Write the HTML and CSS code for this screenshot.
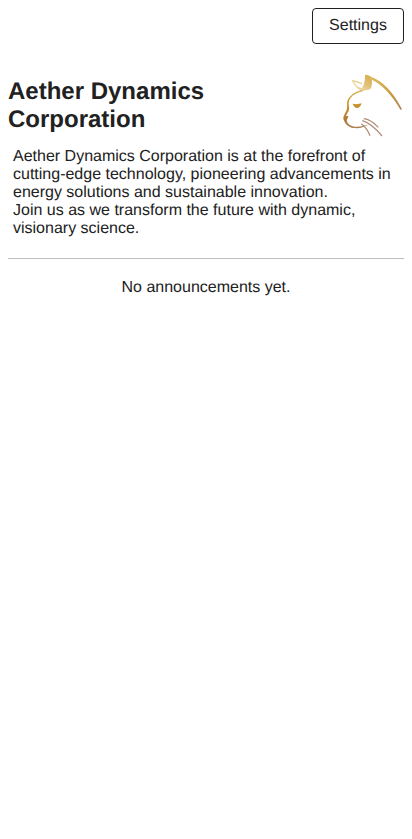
FILE: index.html
```html
<!DOCTYPE html>
<html lang="en">
<head>
<meta charset="utf-8">
<meta name="viewport" content="width=device-width, initial-scale=1">
<title>Aether Dynamics Corporation</title>
<link rel="stylesheet" href="styles.css">
</head>
<body>
<nav class="toolbar"><button class="settings" type="button">Settings</button></nav>
<header class="masthead">
<h1 class="title">Aether Dynamics Corporation</h1>
<svg class="logo" viewBox="0 0 204 222" aria-hidden="true">
<defs>
<linearGradient id="gold" gradientUnits="userSpaceOnUse" x1="100" y1="20" x2="100" y2="200">
<stop offset="0" stop-color="#e6cd8c"/>
<stop offset=".2" stop-color="#dbb35c"/>
<stop offset=".5" stop-color="#c9922c"/>
<stop offset=".75" stop-color="#b27a30"/>
<stop offset="1" stop-color="#a78272"/>
</linearGradient>
<linearGradient id="ear" gradientUnits="userSpaceOnUse" x1="106" y1="30" x2="78" y2="66">
<stop offset="0" stop-color="#d9ae52"/>
<stop offset="1" stop-color="#ead49b"/>
</linearGradient>
<linearGradient id="back" gradientUnits="userSpaceOnUse" x1="100" y1="28" x2="196" y2="125">
<stop offset="0" stop-color="#dfbd65"/>
<stop offset=".5" stop-color="#cda042"/>
<stop offset="1" stop-color="#b08459"/>
</linearGradient>
</defs>
<path class="ear" d="M87 20C97 20 104 24 107 31C109 43 108 55 104 62C94 67 85 67 74 70L80 57C85 45 88 34 87 20Z"/>
<path class="ear" d="M47 36C60 38 69 41 79 46L78 49C69 45 61 43 53 41C58 51 67 58 79 61L75 69C61 59 51 48 47 36Z"/>
<path class="back" d="M102 25C138 37 173 74 198 124L194 126C168 82 139 49 103 33Z"/>
<path class="fill" d="M80 66C59 69 39 83 34 99C32 112 36 122 29 132L23 145L29 146C34 133 41 129 39 116C37 107 38 98 43 91C52 79 65 73 80 70Z"/>
<path class="fill" d="M50 107C59 109 67 109 77 106C75 114 70 120 64 120C57 120 53 114 50 107Z"/>
<path class="fill" d="M23 144C29 143 33 144 37 145C36 151 32 153 32 160C26 161 23 156 22 152Z"/>
<path class="fill" d="M24 156C27 169 38 178 52 180C70 182 87 178 100 168C87 175 70 177 55 176C42 174 34 167 31 157Z"/>
<path class="whisker" d="M83 152C101 154 114 164 127 178M79 158C102 165 119 181 138 204M76 167C88 176 96 187 102 203"/>
</svg>
</header>
<p class="description">Aether Dynamics Corporation is at the forefront of cutting-edge technology, pioneering advancements in energy solutions and sustainable innovation.<br>Join us as we transform the future with dynamic, visionary science.</p>
<main class="announcements">No announcements yet.</main>
</body>
</html>
```
FILE: styles.css
```css
* { box-sizing: border-box; }
body {
  margin: 8px;
  background: #fff;
  color: #212121;
  font: 16px/18px "Liberation Sans", Arial, sans-serif;
  text-rendering: geometricPrecision;
}
.toolbar { display: flex; justify-content: flex-end; }
.settings {
  width: 92px;
  height: 36px;
  padding: 0;
  border: 1px solid #212121;
  border-radius: 4px;
  background: #fff;
  color: inherit;
  font: inherit;
  text-rendering: inherit;
}
.masthead {
  display: flex;
  align-items: center;
  justify-content: space-between;
  margin-top: 24px;
}
.title { width: 240px; margin: 0; padding-top: 2px; font-size: 24px; line-height: 28px; }
.logo { display: block; width: 68px; height: 74px; flex: none; }
.ear { fill: url(#ear); }
.back { fill: url(#back); }
.fill { fill: url(#gold); }
.whisker { fill: none; stroke: #b08c78; stroke-width: 3.6; }
.description { margin: 6px 0 0; padding: 0 5px; }
.announcements {
  margin-top: 20px;
  padding-top: 20px;
  border-top: 1px solid #bdbdbd;
  text-align: center;
}
```
